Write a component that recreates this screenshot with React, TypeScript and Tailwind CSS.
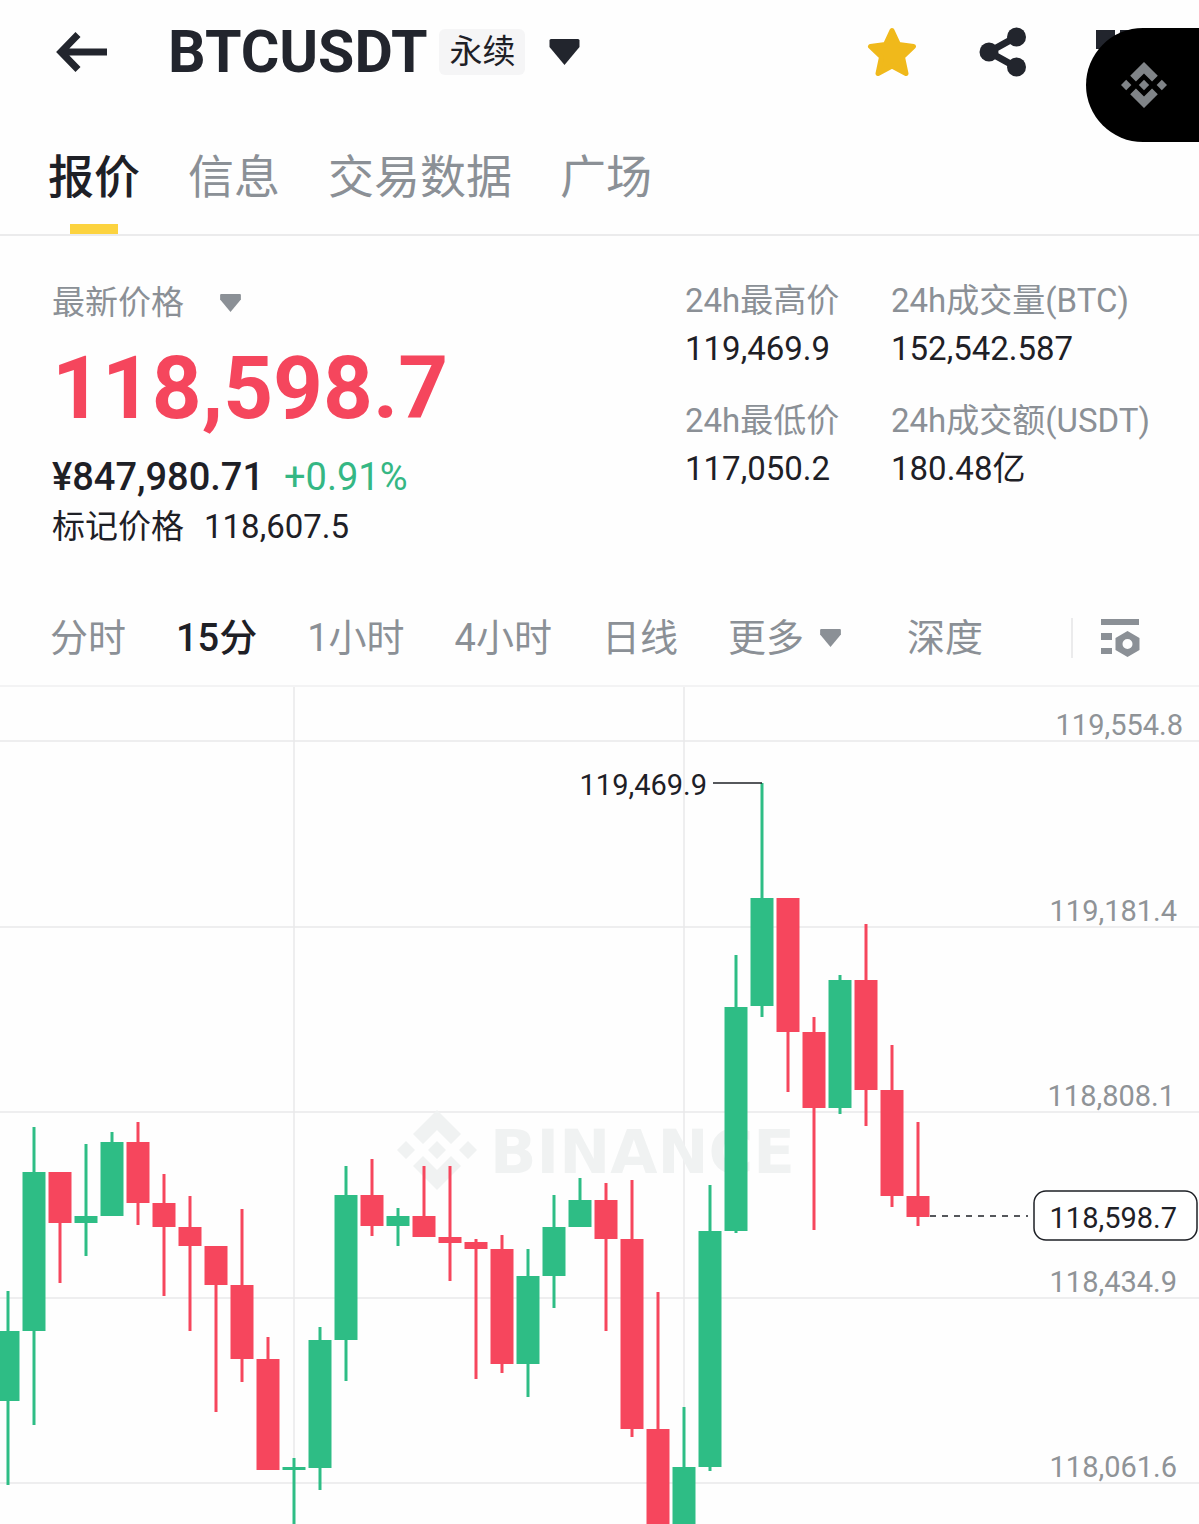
import { useState } from "react";

type Candle = [x: number, high: number, top: number, bottom: number, low: number, up: boolean];

const FONT = "font-[Roboto,'Noto_Sans_CJK_SC',sans-serif]";

const tabs = ["报价", "信息", "交易数据", "广场"];

const stats = [
  {
    width: "w-[154px]",
    items: [
      { label: "24h最高价", value: "119,469.9" },
      { label: "24h最低价", value: "117,050.2" },
    ],
  },
  {
    width: "w-[256px]",
    items: [
      { label: "24h成交量(BTC)", value: "152,542.587" },
      { label: "24h成交额(USDT)", value: "180.48亿" },
    ],
  },
];

// Chart coordinates, origin at the top left of the chart
const candles: Candle[] = [
  [8, 604, 644, 714, 798, true],
  [34, 440, 485, 644, 738, true],
  [60, 485, 485, 536, 596, false],
  [86, 457, 529, 536, 569, true],
  [112, 445, 455, 529, 529, true],
  [138, 435, 455, 516, 538, false],
  [164, 487, 516, 540, 609, false],
  [190, 509, 540, 559, 644, false],
  [216, 559, 559, 598, 725, false],
  [242, 522, 598, 672, 695, false],
  [268, 650, 672, 783, 783, false],
  [294, 771, 780, 783, 850, true],
  [320, 640, 653, 781, 803, true],
  [346, 479, 508, 653, 694, true],
  [372, 472, 508, 539, 549, false],
  [398, 521, 529, 539, 559, true],
  [424, 479, 529, 550, 550, false],
  [450, 479, 550, 556, 594, false],
  [476, 552, 555, 562, 692, false],
  [502, 548, 562, 677, 686, false],
  [528, 562, 589, 677, 710, true],
  [554, 508, 540, 589, 621, true],
  [580, 491, 513, 540, 540, true],
  [606, 496, 513, 552, 644, false],
  [632, 493, 552, 742, 750, false],
  [658, 605, 742, 850, 850, false],
  [684, 720, 780, 850, 850, true],
  [710, 498, 544, 780, 784, true],
  [736, 268, 320, 544, 546, true],
  [762, 96, 211, 319, 330, true],
  [788, 211, 211, 345, 405, false],
  [814, 330, 345, 421, 543, false],
  [840, 288, 293, 421, 427, true],
  [866, 237, 293, 403, 439, false],
  [892, 358, 403, 509, 520, false],
  [918, 435, 509, 530, 539, false],
];

const rows = [54, 240, 425, 611, 796];

const prices = [
  { x: 1183, y: 48, text: "119,554.8" },
  { x: 1177, y: 234, text: "119,181.4" },
  { x: 1175, y: 419, text: "118,808.1" },
  { x: 1177, y: 605, text: "118,434.9" },
  { x: 1177, y: 790, text: "118,061.6" },
];

function BinanceMark({ className }: { className: string }) {
  return (
    <svg viewBox="0 0 80 80" className={className} fill="currentColor" aria-hidden="true">
      <path d="M40 0 64 24 54 34 40 20 26 34 16 24Z" />
      <path d="M40 80 64 56 54 46 40 60 26 46 16 56Z" />
      <path d="M9 31 18 40 9 49 0 40Z" />
      <path d="M71 31 80 40 71 49 62 40Z" />
      <path d="M40 31 49 40 40 49 31 40Z" />
    </svg>
  );
}

function Caret({ className }: { className: string }) {
  return (
    <svg viewBox="0 0 30 26" className={className} fill="currentColor" aria-hidden="true">
      <path d="M0 1.500Q0 0 1.500 0H28.500Q30 0 30 1.500V8L15 26 0 8Z" />
    </svg>
  );
}

function Header() {
  return (
    <header className="relative flex h-[104px] items-center pl-14">
      <button aria-label="返回" className="text-[#22252d]">
        <svg viewBox="0 0 52 40" className="h-10 w-[52px]" fill="none" stroke="currentColor" strokeWidth="7">
          <path d="M51 20H6M22 2.500 5 20 22 37.500" />
        </svg>
      </button>
      <h1 className="ml-[60px] text-[59px] leading-[68px] font-bold text-[#22252d]">BTCUSDT</h1>
      <span className="ml-3 rounded-md bg-[#f5f5f6] px-2.5 text-[33px] leading-[46px]">永续</span>
      <button aria-label="切换合约" className="ml-6">
        <Caret className="h-[26px] w-[31px] text-[#22252d]" />
      </button>
      <div className="mr-[172px] ml-auto flex items-center gap-[62px]">
        <button aria-label="收藏">
          <svg viewBox="0 0 50 50" className="size-[50px]" fill="#f0b91b" stroke="#f0b91b" strokeWidth="5" strokeLinejoin="round">
            <path d="M25 3.500 31.500 17.500 46.500 19.500 35.500 30 39 46.500 25 39 11 46.500 14.500 30 3.500 19.500 18.500 17.500Z" />
          </svg>
        </button>
        <button aria-label="分享">
          <svg viewBox="0 0 48 50" className="h-[50px] w-12 text-[#22252d]" fill="currentColor">
            <path d="M37 10 10 25 37 40" fill="none" stroke="currentColor" strokeWidth="7" />
            <circle cx="10" cy="25" r="9.500" />
            <circle cx="37.500" cy="10" r="9.500" />
            <circle cx="37.500" cy="40" r="9.500" />
          </svg>
        </button>
      </div>
      {/* Grid menu icon, mostly hidden by the floating bubble */}
      <svg viewBox="0 0 44 20" className="absolute top-[30px] right-[59px] h-5 w-11" fill="#22252d" aria-hidden="true">
        <path d="M0 0H19V19H0ZM24 0H43V19H24Z" />
      </svg>
      <button
        aria-label="Binance"
        className="absolute top-7 right-0 flex h-[114px] w-[113px] items-center rounded-l-full bg-black pl-[35px]"
      >
        <BinanceMark className="size-[46px] text-[#808488]" />
      </button>
    </header>
  );
}

function Tabs() {
  const [active, setActive] = useState("报价");
  return (
    <nav className="flex h-[132px] gap-12 border-b-2 border-[#ebebec] pt-10 pl-12">
      {tabs.map((tab) => (
        <button
          key={tab}
          onClick={() => setActive(tab)}
          className={`relative flex items-start text-[46px] leading-[66px] ${
            active === tab ? "font-medium text-[#1e2026]" : "text-[#8b9096]"
          }`}
        >
          {tab}
          {active === tab && <span className="absolute bottom-0 left-1/2 h-2.5 w-12 -translate-x-1/2 bg-[#fcd33f]" />}
        </button>
      ))}
    </nav>
  );
}

function Summary() {
  return (
    <section className="flex justify-between px-[52px] pt-[41px]">
      <div>
        <button className="flex items-center gap-9 text-[33px] leading-[52px] text-[#8b9096]">
          最新价格
          <Caret className="h-[18px] w-[21px]" />
        </button>
        <div className="pt-1 text-[87px] leading-[110px] font-bold text-[#f5465d]">118,598.7</div>
        <div className="flex gap-5 pt-2 text-[38px] leading-[52px]">
          <span className="font-medium">¥847,980.71</span>
          <span className="text-[#35b784]">+0.91%</span>
        </div>
        <div className="flex gap-5 text-[33px] leading-[48px]">
          <span>标记价格</span>
          <span>118,607.5</span>
        </div>
      </div>
      <div className="flex gap-[52px] text-[33px] leading-[48px] whitespace-nowrap">
        {stats.map((column) => (
          <dl key={column.width} className={`flex flex-col gap-6 ${column.width}`}>
            {column.items.map((item) => (
              <div key={item.label}>
                <dt className="text-[#8b9096]">{item.label}</dt>
                <dd>{item.value}</dd>
              </div>
            ))}
          </dl>
        ))}
      </div>
    </section>
  );
}

function Intervals() {
  const [active, setActive] = useState("15分");
  return (
    <div className="mt-10 flex h-[94px] items-center pr-[58px] pl-[50px] text-[38px] leading-[56px] text-[#8b9096]">
      <div className="flex gap-[50px]">
        {["分时", "15分", "1小时", "4小时", "日线"].map((item) => (
          <button
            key={item}
            onClick={() => setActive(item)}
            className={active === item ? "font-medium text-[#1e2026]" : ""}
          >
            {item}
          </button>
        ))}
        <button className="flex items-center gap-4">
          更多
          <Caret className="h-[18px] w-[21px]" />
        </button>
      </div>
      <button className="ml-[66px]">深度</button>
      <button aria-label="图表设置" className="ml-auto flex items-center gap-7 before:h-10 before:w-0.5 before:bg-[#ebebec]">
        <svg viewBox="0 0 40 40" className="size-10" fill="currentColor">
          <path d="M0 1H38V7H0ZM0 15H11V22H0ZM0 30H11V36H0Z" />
          <path fillRule="evenodd" d="M26.500 13 38.500 20V32L26.500 39 14.500 32V20ZM26.500 21A5 5 0 1 0 26.500 31 5 5 0 1 0 26.500 21Z" />
        </svg>
      </button>
    </div>
  );
}

function Chart() {
  return (
    <svg viewBox="0 0 1199 838" className="block w-full border-t-2 border-[#f3f3f4]" role="img" aria-label="BTCUSDT 15分 K线">
      <g stroke="#e9e9ea" strokeWidth="1.500">
        {rows.map((y) => (
          <line key={y} x1="0" x2="1199" y1={y} y2={y} />
        ))}
        <line x1="294" x2="294" y1="0" y2="838" />
        <line x1="684" x2="684" y1="0" y2="838" />
      </g>
      <g fill="#f0f2f2">
        <svg x="397" y="423" width="80" height="80">
          <path d="M40 0 64 24 54 34 40 20 26 34 16 24Z" />
          <path d="M40 80 64 56 54 46 40 60 26 46 16 56Z" />
          <path d="M9 31 18 40 9 49 0 40ZM71 31 80 40 71 49 62 40ZM40 31 49 40 40 49 31 40Z" />
        </svg>
        <text x="490" y="486" fontSize="61" fontWeight="700" className="font-['DejaVu_Sans',sans-serif]">
          BINANCE
        </text>
      </g>
      {candles.map(([x, high, top, bottom, low, up]) => (
        <g key={x} fill={up ? "#2ebd85" : "#f6465d"}>
          <rect x={x - 1.5} y={high} width="3" height={low - high} />
          <rect x={x - 11.5} y={top} width="23" height={bottom - top} />
        </g>
      ))}
      <g fontSize="29" textAnchor="end" fill="#8f9397">
        {prices.map((p) => (
          <text key={p.text} x={p.x} y={p.y}>
            {p.text}
          </text>
        ))}
      </g>
      <g stroke="#1e2026" strokeWidth="1.500">
        <line x1="713" x2="762" y1="96" y2="96" />
        <line x1="930" x2="1028" y1="529" y2="529" strokeDasharray="6 6" />
        <rect x="1034" y="504" width="163" height="49" rx="12" fill="#fff" />
      </g>
      <g fontSize="29" textAnchor="end" fill="#1e2026">
        <text x="707" y="108">119,469.9</text>
        <text x="1177" y="541">118,598.7</text>
      </g>
    </svg>
  );
}

export default function App() {
  return (
    <main className={`min-h-screen overflow-hidden bg-[#fefefe] text-[#1e2026] ${FONT}`}>
      <Header />
      <Tabs />
      <Summary />
      <Intervals />
      <Chart />
    </main>
  );
}
